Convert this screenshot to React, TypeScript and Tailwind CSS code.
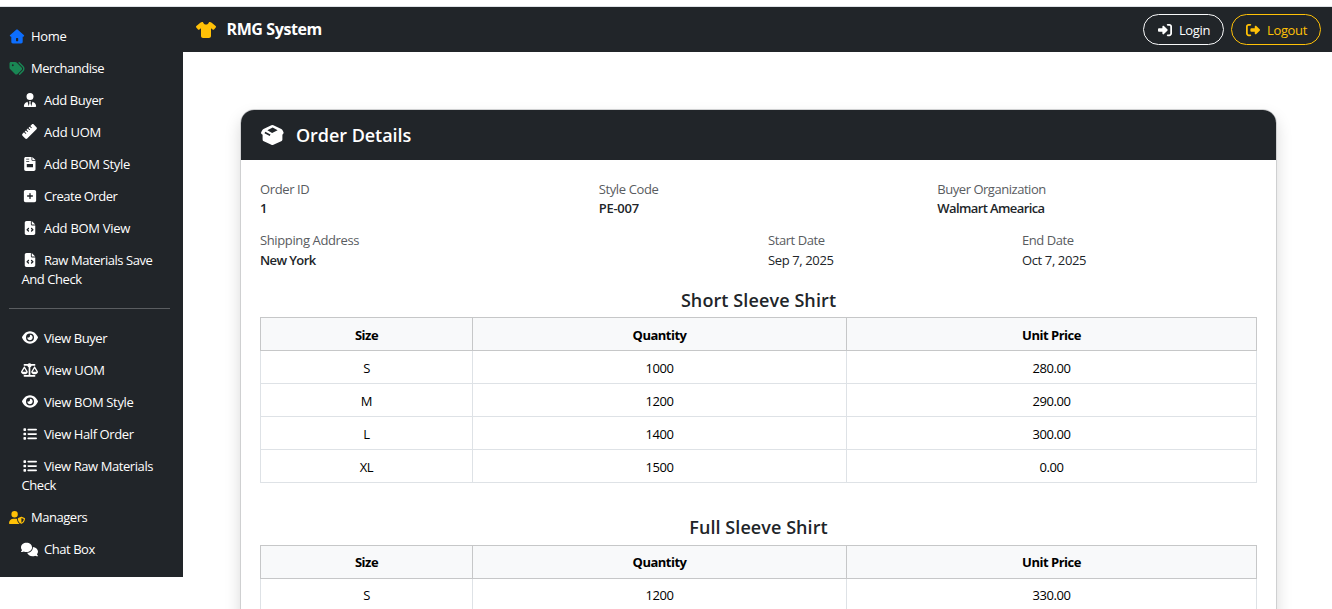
import type { ComponentType, ReactNode } from 'react';
import {
  FaComments,
  FaEye,
  FaFileCode,
  FaList,
  FaRightFromBracket,
  FaRightToBracket,
  FaRuler,
  FaScaleBalanced,
  FaShirt,
  FaSquarePlus,
  FaTags,
  FaUserShield,
  FaUserTie,
} from 'react-icons/fa6';

type IconType = ComponentType<{ className?: string }>;

function HomeIcon({ className }: { className?: string }) {
  return (
    <svg viewBox="0 0 15 15" className={className} fill="currentColor">
      <path
        fillRule="evenodd"
        d="M6.7.7a1.2 1.2 0 0 1 1.6 0l6 5.3c.7.6.3 1.7-.6 1.7h-.5v5.1c0 .9-.7 1.6-1.6 1.6H3.4c-.9 0-1.6-.7-1.6-1.6V7.7h-.5C.4 7.7 0 6.6.7 6zM6.5 9.4v2.3c0 .3.2.5.5.5h1.2c.3 0 .5-.2.5-.5V9.4c0-.3-.2-.5-.5-.5H7c-.3 0-.5.2-.5.5z"
      />
    </svg>
  );
}

function BoxIcon({ className }: { className?: string }) {
  return (
    <svg viewBox="0 0 23 20" className={className} fill="currentColor">
      <path
        fillRule="evenodd"
        d="M10.4.3a2.4 2.4 0 0 1 2 0l7.9 3.7c.5.2.9.6 1.1 1.1l1 2c.4.7.2 1.500-.4 2l-.6.700v4.600c0 .8-.5 1.500-1.200 1.900l-7.800 3.500a2.400 2.400 0 0 1-2 0l-7.600-3.500a2.100 2.100 0 0 1-1.200-1.900V9.800l-1-.7C0 8.600-.1 7.800.3 7.100l1.100-2c.3-.5.6-.9 1.100-1.100zM11.700 2.600 6.400 5.200l4.700 2.700 5.500-2.600zM4.300 6.700 3.500 8.200l5.200 2.900.8-1.500z"
      />
    </svg>
  );
}

function InvoiceIcon({ className }: { className?: string }) {
  return (
    <svg viewBox="0 0 14 14" className={className} fill="currentColor">
      <path
        fillRule="evenodd"
        d="M2.900 0H8.500v2.800c0 .5.4.9.9.9h3.100v8.600c0 1-.7 1.700-1.700 1.700H2.900c-1 0-1.700-.7-1.700-1.700V1.700C1.200.7 1.900 0 2.900 0zM3.200 1.800v.8h3v-.8zM3.200 4v.8h3V4zM3.800 6.900v3.300h6.200V6.900zM9.300 0l3.200 2.900H9.300z"
      />
    </svg>
  );
}

type Item = { label: ReactNode; icon: IconType; track: string; size?: string };

const addItems: Item[] = [
  { label: 'Add Buyer', icon: FaUserTie, track: 'tracking-[-0.42px]', size: 'w-[14px] h-[14px]' },
  { label: 'Add UOM', icon: FaRuler, track: 'tracking-[-0.25px]', size: 'w-[15px] h-[15px]' },
  { label: 'Add BOM Style', icon: InvoiceIcon, track: 'tracking-[-0.3px]', size: 'w-[14px] h-[14px]' },
  { label: 'Create Order', icon: FaSquarePlus, track: 'tracking-[-0.5px]', size: 'w-[14px] h-[14px]' },
  { label: 'Add BOM View', icon: FaFileCode, track: 'tracking-[-0.28px]', size: 'w-[14px] h-[14px]' },
  { label: 'Raw Materials Save And Check', icon: FaFileCode, track: 'tracking-[-0.44px]', size: 'w-[14px] h-[14px]' },
];

const viewItems: Item[] = [
  { label: 'View Buyer', icon: FaEye, track: 'tracking-[-0.42px]', size: 'w-4 h-[15px]' },
  { label: 'View UOM', icon: FaScaleBalanced, track: 'tracking-[-0.3px]', size: 'w-[17px] h-[14px]' },
  { label: 'View BOM Style', icon: FaEye, track: 'tracking-[-0.34px]', size: 'w-4 h-[15px]' },
  { label: 'View Half Order', icon: FaList, track: 'tracking-[-0.4px]', size: 'w-[14px] h-[14px]' },
  { label: 'View Raw Materials Check', icon: FaList, track: 'tracking-[-0.42px]', size: 'w-[14px] h-[14px]' },
];

function TopItem({ label, icon: Icon, color, track }: { label: string; icon: IconType; color: string; track: string }) {
  return (
    <a className={`flex h-8 items-center pl-[9px] ${track}`}>
      <Icon className={`mb-px mr-[6px] h-[15px] w-4 ${color}`} />
      {label}
    </a>
  );
}

function SubItem({ label, icon: Icon, track, size = 'w-[13px] h-[13px]' }: Item) {
  return (
    <a className={`block py-[6.25px] pl-[21.5px] pr-4 leading-[19.5px] ${track}`}>
      <span className="mr-[6px] inline-flex h-[15px] w-[16.5px] items-center justify-center align-[-2.5px]">
        <Icon className={`shrink-0 ${size}`} />
      </span>
      {label}
    </a>
  );
}

function Sidebar() {
  return (
    <aside className="h-[570px] w-[183px] shrink-0 bg-[#212529] pt-[13.5px] text-[13px] text-white">
      <TopItem label="Home" icon={HomeIcon} color="text-[#0d6efd]" track="tracking-[-0.3px]" />
      <TopItem label="Merchandise" icon={FaTags} color="text-[#198754]" track="tracking-[-0.5px]" />
      {addItems.map((item, i) => (
        <SubItem key={i} {...item} />
      ))}
      <hr className="mb-[13.5px] ml-[9px] mr-[13px] mt-[12px] border-[#5a5d60]" />
      {viewItems.map((item, i) => (
        <SubItem key={i} {...item} />
      ))}
      <TopItem label="Managers" icon={FaUserShield} color="text-[#ffc107]" track="tracking-[-0.46px]" />
      <SubItem label="Chat Box" icon={FaComments} track="tracking-[-0.45px]" size="w-[17px] h-[15px]" />
    </aside>
  );
}

function Navbar() {
  return (
    <header className="flex h-[45px] items-center bg-[#212529] pl-[13px] pr-[11px] text-white">
      <FaShirt className="h-4 w-5 text-[#ffc107]" />
      <span className="mb-px ml-[10.5px] text-base font-bold tracking-[-0.4px]">RMG System</span>
      <div className="ml-auto flex gap-[7px] text-[13px]">
        <button className="flex h-[31px] w-[81px] items-center justify-center gap-[7px] rounded-full border border-[#f8f9fa] pl-px pt-[2px] tracking-[-0.35px]">
          <FaRightToBracket className="mb-px h-[14px] w-[14px]" />
          Login
        </button>
        <button className="flex h-[31px] w-[90px] items-center justify-center gap-[7px] rounded-full border border-[#ffc107] pl-px pt-[2px] tracking-[-0.35px] text-[#ffc107]">
          <FaRightFromBracket className="mb-px h-[14px] w-[14px]" />
          Logout
        </button>
      </div>
    </header>
  );
}

function Field({ label, value, span, bold = true, track, valueTrack }: {
  label: string;
  value: string;
  span: string;
  bold?: boolean;
  track: string;
  valueTrack: string;
}) {
  return (
    <div className={span}>
      <div className={`text-[#595c5f] ${track}`}>{label}</div>
      <div className={`${bold ? 'font-semibold' : ''} ${valueTrack}`}>{value}</div>
    </div>
  );
}

const shortSleeve = [
  ['S', '1000', '280.00'],
  ['M', '1200', '290.00'],
  ['L', '1400', '300.00'],
  ['XL', '1500', '0.00'],
];

const fullSleeve = [['S', '1200', '330.00']];

function SizeTable({ title, rows, track, cellPad }: { title: string; rows: string[][]; track: string; cellPad: string }) {
  return (
    <section>
      <h5 className={`h-[28px] text-center text-[18px] font-semibold leading-[22px] ${track}`}>{title}</h5>
      <table className="w-[997px] table-fixed border-collapse text-center leading-[19px] text-black">
        <colgroup>
          <col className="w-[212px]" />
          <col className="w-[374px]" />
          <col className="w-[410px]" />
        </colgroup>
        <thead>
          <tr className="h-[33px] bg-[#f8f9fa]">
            {['Size', 'Quantity', 'Unit Price'].map((h) => (
              <th key={h} className={`border border-[#c6c7c8] px-0 font-bold tracking-[-0.5px] ${cellPad}`}>
                {h}
              </th>
            ))}
          </tr>
        </thead>
        <tbody>
          {rows.map((r) => (
            <tr key={r[0]} className="h-[33px]">
              {r.map((c) => (
                <td key={c} className={`border border-[#dee2e6] px-0 tracking-[-0.42px] ${cellPad}`}>
                  {c}
                </td>
              ))}
            </tr>
          ))}
        </tbody>
      </table>
    </section>
  );
}

function OrderCard() {
  return (
    <article className="ml-[57px] mt-[57px] w-[1037px] rounded-[14px] border border-[#cfd0d1] bg-white shadow-[0_8px_16px_rgba(0,0,0,0.15)]">
      <h4 className="flex h-[50px] items-center rounded-t-[13px] bg-[#212529] pl-5 text-[18px] font-semibold tracking-[-0.05px] text-white">
        <BoxIcon className="mr-3 h-5 w-[23px]" />
        Order Details
      </h4>
      <div className="h-[560px] px-[19px] pt-[19.5px] text-[13px] leading-[19.5px] text-[#212529]">
        <div className="-mr-[19px] grid grid-cols-12">
          <Field span="col-span-4" label="Order ID" value="1" track="tracking-[-0.38px]" valueTrack="" />
          <Field span="col-span-4" label="Style Code" value="PE-007" track="tracking-[-0.37px]" valueTrack="tracking-[-0.25px]" />
          <Field span="col-span-4" label="Buyer Organization" value="Walmart Amearica" track="tracking-[-0.47px]" valueTrack="tracking-[-0.6px]" />
        </div>
        <div className="-mr-[19px] mt-[12.5px] grid grid-cols-12">
          <Field span="col-span-6" label="Shipping Address" value="New York" track="tracking-[-0.38px]" valueTrack="tracking-[-0.6px]" />
          <Field span="col-span-3" label="Start Date" value="Sep 7, 2025" bold={false} track="tracking-[-0.42px]" valueTrack="tracking-[-0.38px]" />
          <Field span="col-span-3" label="End Date" value="Oct 7, 2025" bold={false} track="tracking-[-0.45px]" valueTrack="tracking-[-0.38px]" />
        </div>
        <div className="mt-[19px] flex flex-col gap-[34px]">
          <SizeTable title="Short Sleeve Shirt" rows={shortSleeve} track="tracking-[0.1px]" cellPad="pb-0 pt-[2px]" />
          <SizeTable title="Full Sleeve Shirt" rows={fullSleeve} track="tracking-[0.07px] -mt-px mb-px" cellPad="py-0" />
        </div>
      </div>
    </article>
  );
}

export default function App() {
  return (
    <div className="h-[609px] overflow-hidden bg-white pt-[6px] font-['Open_Sans','Noto_Sans',sans-serif]">
      <div className="h-px bg-[#dee2e6]" />
      <div className="flex items-start">
        <Sidebar />
        <main className="min-w-0 flex-1">
          <Navbar />
          <OrderCard />
        </main>
      </div>
    </div>
  );
}
